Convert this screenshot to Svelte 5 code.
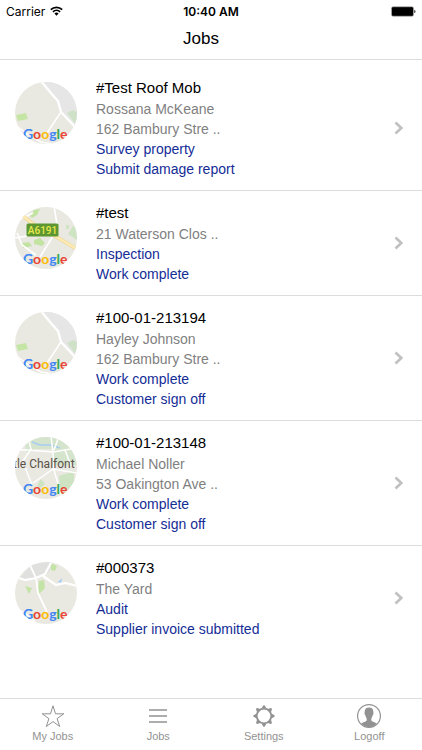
<script lang="ts">
  type MapName = 'bambury' | 'waterson' | 'chalfont' | 'yard';

  interface Job {
    id: number;
    title: string;
    details: string[];
    statuses: string[];
    map: MapName;
  }

  const jobs: Job[] = [
    {
      id: 1,
      title: '#Test Roof Mob',
      details: ['Rossana McKeane', '162 Bambury Stre ..'],
      statuses: ['Survey property', 'Submit damage report'],
      map: 'bambury',
    },
    {
      id: 2,
      title: '#test',
      details: ['21 Waterson Clos ..'],
      statuses: ['Inspection', 'Work complete'],
      map: 'waterson',
    },
    {
      id: 3,
      title: '#100-01-213194',
      details: ['Hayley Johnson', '162 Bambury Stre ..'],
      statuses: ['Work complete', 'Customer sign off'],
      map: 'bambury',
    },
    {
      id: 4,
      title: '#100-01-213148',
      details: ['Michael Noller', '53 Oakington Ave ..'],
      statuses: ['Work complete', 'Customer sign off'],
      map: 'chalfont',
    },
    {
      id: 5,
      title: '#000373',
      details: ['The Yard'],
      statuses: ['Audit', 'Supplier invoice submitted'],
      map: 'yard',
    },
  ];

  const tabs = ['My Jobs', 'Jobs', 'Settings', 'Logoff'];
  const gearTeeth = [0, 45, 90, 135, 180, 225, 270, 315];
</script>

<div class="screen">
  <div class="status-bar">
    <div class="carrier">
      <span>Carrier</span>
      <svg width="13" height="10" viewBox="0 0 13 10" aria-hidden="true">
        <g fill="none" stroke="#000" stroke-width="1.7">
          <path d="M0.8 3.6a8.2 8.2 0 0 1 11.4 0" />
          <path d="M2.9 5.9a5.2 5.2 0 0 1 7.2 0" />
        </g>
        <path d="M6.5 9.8 4.4 7.6a3 3 0 0 1 4.2 0z" />
      </svg>
    </div>
    <span class="time">10:40 AM</span>
    <div class="battery">
      <svg width="25" height="11" viewBox="0 0 25 11" aria-hidden="true">
        <rect x="0.3" y="0.5" width="22.4" height="10" rx="1.8" fill="#777" />
        <rect x="1" y="1.2" width="21" height="8.6" rx="1" />
        <path d="M23.4 3.8c1.4.5 1.4 2.9 0 3.4z" />
      </svg>
    </div>
  </div>

  <header>
    <h1>Jobs</h1>
  </header>

  <main>
    <ul class="jobs">
      {#each jobs as job (job.id)}
        <li>
          <a class="job" href="#job-{job.id}">
            <svg class="map" viewBox="0 0 62 62" aria-hidden="true">
              <rect width="62" height="62" fill="#e9e8e1" />
              {#if job.map === 'bambury'}
                <path d="M26 0 35 10l8 9 3 11 16 16V0z" fill="#e5e6e5" />
                <path d="m1 33 10-2 2 6-10 2z" fill="#c5e5a5" />
                <path d="m52 31 6-3 4 2v14z" fill="#cfe2c8" />
                <g class="road">
                  <path d="M26-1 35 10l8 9 3 11 16 17" stroke-width="2.4" />
                  <path d="M46 30 32 51" stroke-width="1.5" />
                  <path d="M2 44l10 8 14 8 12 2" stroke-width="1.5" />
                </g>
              {:else if job.map === 'waterson'}
                <path d="m15 9 4-6 6-1-3 6-5 3zM19 33l6-2 5 5-3 3-8-2zM7 36l7-1 3 4-9 2z" fill="#c3e3a3" />
                <path d="m53 27 5-8 4 2v12zM51 18l3 0v4h-3z" fill="#cfe4c2" />
                <g class="road">
                  <path d="m39-1 3 18M38 29 25 50M0 31l12-2M0 14l10-4 8-4M2 26l5 12 14 10" stroke-width="1.6" />
                </g>
                <path d="m4 6 18 14 16 8 24 14" fill="none" stroke="#f0d48e" stroke-width="3.6" />
                <path d="m4 6 18 14 16 8 24 14" fill="none" stroke="#fdebb5" stroke-width="2.4" />
                <rect x="11.5" y="16.5" width="32" height="13" rx="1.5" fill="#5d9732" />
                <text class="road-number" x="27.5" y="26.5" text-anchor="middle">A6191</text>
              {:else if job.map === 'chalfont'}
                <path d="M8 0h54v28H37V12H20l-8 4z" fill="#d5e4cd" />
                <path d="m44 39 15-5v18l-13 8zM22 49l4-7 4 5-5 4z" fill="#cee3c1" />
                <path d="m17 5 8 3 11 0 9 3" fill="none" stroke="#a9cdf3" stroke-width="1.5" />
                <g class="road" stroke-width="1.5">
                  <path d="m36-1 2 17 1 17 8 28M4 13l9 0 25 2 24-4M44-1l-5 14M13 0l3 12-8 12-8 8M10 30l7 18M18 46l20-14 24 4M50 13l6 16" />
                </g>
                <text class="place" x="-2" y="31">tle Chalfont</text>
              {:else}
                <path d="m4 17 12-14 22-4-4 11-12 7z" fill="#e0e0df" />
                <path d="m36 1 6 3-2 5-4-1zM24 19l5-1 1 8-6 6-1-5zM10 24l7 2-3 6z" fill="#c3e4a6" />
                <path d="m43 20 4-4-1 5" fill="#a6ccf8" />
                <g class="road">
                  <path d="m14 1 7 15 2 15 9 19" stroke-width="1.8" />
                  <path d="m1 15 9 3 11-2 9-4 7-13M28 14l13 9 9-2 12 3" stroke-width="2.2" />
                  <path d="M2 46l12 8 8 8" stroke-width="1.5" />
                </g>
              {/if}
              <text class="logo" x="8" y="57">
                <tspan fill="#4285f4">G</tspan><tspan fill="#ea4335">o</tspan><tspan fill="#fbbc05">o</tspan><tspan fill="#4285f4">g</tspan><tspan fill="#34a853">l</tspan><tspan fill="#ea4335">e</tspan>
              </text>
            </svg>

            <div class="info">
              <h2>{job.title}</h2>
              {#each job.details as detail}
                <p>{detail}</p>
              {/each}
              {#each job.statuses as status}
                <p class="status">{status}</p>
              {/each}
            </div>

            <svg class="chevron" viewBox="0 0 10 14" aria-hidden="true">
              <path d="m1.5 1.5 5.8 5.5-5.8 5.5" />
            </svg>
          </a>
        </li>
      {/each}
    </ul>
  </main>

  <nav>
    {#each tabs as tab (tab)}
      <button type="button">
        <svg width="26" height="26" viewBox="0 0 26 26" aria-hidden="true">
          {#if tab === 'My Jobs'}
            <path d="m13 2.8 2.5 8h8.3l-6.7 4.8 2.6 7.9-6.7-4.9-6.7 4.9 2.6-7.9-6.7-4.8h8.3z" fill="none" stroke="#929292" />
          {:else if tab === 'Jobs'}
            <path d="M4 7h18M4 13h18M4 19h18" stroke="#929292" stroke-width="1.3" />
          {:else if tab === 'Settings'}
            <circle cx="13" cy="13" r="7.3" fill="none" stroke="#929292" stroke-width="1.8" />
            {#each gearTeeth as angle}
              <path d="m10.6 5.6 1.6-3q.8-.7 1.6 0l1.6 3z" fill="#929292" transform="rotate({angle} 13 13)" />
            {/each}
          {:else}
            <circle cx="13" cy="13" r="11.4" fill="none" stroke="#929292" stroke-width="1.2" />
            <path d="M13 4.5c3 0 4.5 1.8 4.3 4.6.5 1.8-.2 3-.8 3.4-.3 1.7-.8 2.4-1.2 2.9v2.2c1.2 1.5 3.8 1.5 5.6 3.2a11 11 0 0 1-15.8 0c1.8-1.7 4.4-1.7 5.6-3.2v-2.2c-.4-.5-.9-1.2-1.2-2.9-.6-.4-1.3-1.6-.8-3.4-.2-2.8 1.3-4.6 4.3-4.6z" fill="#929292" />
          {/if}
        </svg>
        <span>{tab}</span>
      </button>
    {/each}
  </nav>
</div>

<style>
  :global(body) {
    margin: 0;
    background: #fff;
  }

  .screen {
    display: flex;
    flex-direction: column;
    min-height: 100vh;
    font-family: 'Liberation Sans', Arial, sans-serif;
    color: #000;
  }

  .status-bar {
    display: grid;
    grid-template-columns: 1fr auto 1fr;
    align-items: center;
    height: 22px;
    padding: 0 6px;
    font-family: Inter, sans-serif;
    font-size: 12px;
  }

  .carrier {
    display: flex;
    align-items: center;
    gap: 5px;
  }

  .time {
    font-weight: 600;
  }

  .battery {
    display: flex;
    justify-content: flex-end;
  }

  header {
    display: flex;
    justify-content: center;
    padding: 7px 20px 10px 0;
    border-bottom: 1px solid #dcdcdc;
  }

  h1 {
    margin: 0;
    font-size: 17px;
    line-height: 20px;
    font-weight: 400;
  }

  main {
    flex: 1;
  }

  .jobs {
    margin: 0;
    padding: 6px 0 0;
    list-style: none;
  }

  .jobs li + li {
    border-top: 1px solid #dcdcdc;
  }

  .job {
    display: flex;
    align-items: center;
    padding: 11px 18px 11px 15px;
    color: inherit;
    text-decoration: none;
  }

  .map {
    flex: none;
    align-self: flex-start;
    width: 62px;
    height: 62px;
    margin-top: 5px;
    border-radius: 50%;
  }

  .road {
    fill: none;
    stroke: #fff;
  }

  .road-number {
    font: 500 10px Roboto, sans-serif;
    fill: #e9e84a;
  }

  .place {
    font: 400 12px Roboto, sans-serif;
    fill: #5b5149;
  }

  .logo {
    font: 700 14px Lato, sans-serif;
  }

  .info {
    flex: 1;
    min-width: 0;
    margin-left: 19px;
  }

  h2,
  p {
    margin: 0;
    overflow: hidden;
    font-weight: 400;
    text-overflow: ellipsis;
    white-space: nowrap;
  }

  h2 {
    font-size: 15px;
    line-height: 22px;
  }

  p {
    font-size: 14px;
    line-height: 20px;
    color: #7f7f7f;
  }

  .status {
    color: #142d96;
  }

  .chevron {
    width: 10px;
    height: 14px;
    fill: none;
    stroke: #c0c0c0;
    stroke-width: 2.6;
  }

  nav {
    display: grid;
    grid-template-columns: repeat(4, 1fr);
    border-top: 1px solid #dcdcdc;
    background: #fff;
  }

  button {
    display: flex;
    flex-direction: column;
    align-items: center;
    padding: 4px 0 7px;
    border: none;
    background: none;
    color: #929292;
    font-family: inherit;
    font-size: 11px;
    line-height: 14px;
    cursor: pointer;
  }
</style>
